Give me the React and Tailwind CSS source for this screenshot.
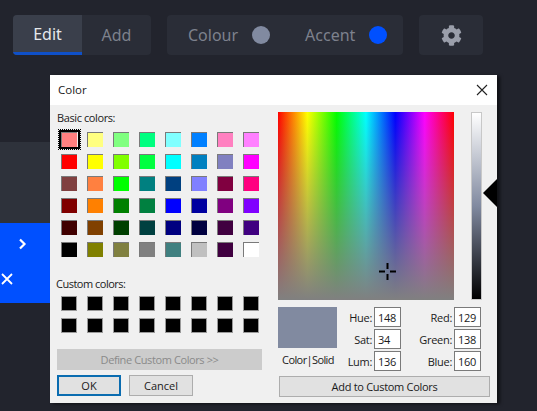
import React from "react";
import { FaCog } from "react-icons/fa";

const basic = [
  "bg-[#ff8080]","bg-[#ffff80]","bg-[#80ff80]","bg-[#00ff80]","bg-[#80ffff]","bg-[#0080ff]","bg-[#ff80c0]","bg-[#ff80ff]",
  "bg-[#ff0000]","bg-[#ffff00]","bg-[#80ff00]","bg-[#00ff40]","bg-[#00ffff]","bg-[#0080c0]","bg-[#8080c0]","bg-[#ff00ff]",
  "bg-[#804040]","bg-[#ff8040]","bg-[#00ff00]","bg-[#008080]","bg-[#004080]","bg-[#8080ff]","bg-[#800040]","bg-[#ff0080]",
  "bg-[#800000]","bg-[#ff8000]","bg-[#008000]","bg-[#008040]","bg-[#0000ff]","bg-[#0000a0]","bg-[#800080]","bg-[#8000ff]",
  "bg-[#400000]","bg-[#804000]","bg-[#004000]","bg-[#004040]","bg-[#000080]","bg-[#000040]","bg-[#400040]","bg-[#400080]",
  "bg-[#000000]","bg-[#808000]","bg-[#808040]","bg-[#808080]","bg-[#408080]","bg-[#c0c0c0]","bg-[#400040]","bg-[#ffffff]",
];

function Swatch({ color, selected }) {
  return (
    <div className={`relative h-[15px] w-[16px] border-t border-l border-[#7a7a7a] ${color}`}>
      {selected && (
        <div className="absolute -top-[3px] -left-[3px] h-[19px] w-[21px] border-2 border-black outline-1 outline-offset-0 outline-dotted outline-black" />
      )}
    </div>
  );
}

function Field({ label, value, labelWidth }) {
  return (
    <div className="flex items-center">
      <span className={`text-right ${labelWidth}`}>{label}</span>
      <div className="ml-[2px] flex h-[20px] w-[27px] items-center border border-[#7a7a7a] bg-white pl-[3px]">{value}</div>
    </div>
  );
}

export default function App() {
  return (
    <div className="relative h-[411px] w-[537px] overflow-hidden bg-[#22242d] font-['Noto_Sans',sans-serif]">
      <div className="flex gap-4 pl-[13px] pt-[15px] text-base">
        <div className="flex h-10 w-[138px] overflow-hidden rounded-sm bg-[#2a2d37] text-[#7d818d]">
          <div className="flex w-[69px] items-center justify-center border-b-[3px] border-[#0f50c8] bg-[#3a3f4b] text-[#e6e8ec]">Edit</div>
          <div className="flex w-[69px] items-center justify-center">Add</div>
        </div>
        <div className="flex h-10 w-[236px] items-center rounded-sm bg-[#2a2d37] pl-[21px] text-[#7d818d]">
          <span>Colour</span>
          <span className="ml-[14px] h-[18px] w-[18px] rounded-full bg-[#818aa0]" />
          <span className="ml-[35px]">Accent</span>
          <span className="ml-[14px] h-[18px] w-[18px] rounded-full bg-[#0050ff]" />
        </div>
        <div className="flex h-10 w-16 items-center justify-center rounded-sm bg-[#2a2d37] text-[#9a9eaa]">
          <FaCog size={21} />
        </div>
      </div>

      <div className="mt-[87px] flex h-[161px] w-[50px] flex-col">
        <div className="h-[81px] bg-[#2e323b]" />
        <div className="flex h-[80px] flex-col bg-[#0050ff] text-white">
          <svg className="ml-[18px] mt-[15px]" width="9" height="12" viewBox="0 0 9 12" fill="none" stroke="currentColor" strokeWidth="2.2">
            <path d="M2 1.5 L6.5 6 L2 10.5" />
          </svg>
          <svg className="ml-[1px] mt-[23px]" width="12" height="12" viewBox="0 0 12 12" fill="none" stroke="currentColor" strokeWidth="1.8">
            <path d="M1 1 L11 11 M11 1 L1 11" />
          </svg>
        </div>
      </div>

      <div className="absolute left-[50px] top-[75px] flex h-[328px] w-[447px] flex-col bg-[#f0f0f0] text-[11px] leading-none text-[#1a1a1a] shadow-[3px_1px_3px_rgba(0,0,0,0.55)] font-['Open_Sans',sans-serif]">
        <div className="flex h-[30px] shrink-0 items-center justify-between bg-white pl-[8px] pr-[9px] text-[11.5px]">
          <span>Color</span>
          <svg width="12" height="12" viewBox="0 0 12 12" fill="none" stroke="#222" strokeWidth="1.1">
            <path d="M1 1 L11 11 M11 1 L1 11" />
          </svg>
        </div>
        <div className="flex flex-1">
          <div className="w-[228px] pl-[7px]">
            <div className="pt-[7px] tracking-[-0.4px]">Basic colors:</div>
            <div className="ml-[4px] mt-[9px] grid grid-cols-[repeat(8,16px)] gap-x-[10px] gap-y-[7px]">
              {basic.map((c, i) => (
                <Swatch key={i} color={c} selected={i === 0} />
              ))}
            </div>
            <div className="pt-[21px] -ml-px tracking-[-0.5px]">Custom colors:</div>
            <div className="ml-[4px] mt-[7px] grid grid-cols-[repeat(8,16px)] gap-x-[10px] gap-y-[7px]">
              {Array.from({ length: 16 }).map((_, i) => (
                <div key={i} className="h-[15px] w-[16px] border border-[#9a9a9a] bg-black" />
              ))}
            </div>
            <div className="mt-[16px] flex h-[21px] w-[205px] items-center justify-center bg-[#cccccc] tracking-[-0.4px] text-[#8a8a8a]">Define Custom Colors &gt;&gt;</div>
            <div className="mt-[5px] flex gap-2">
              <div className="flex h-[21px] w-[64px] items-center justify-center border-2 border-[#0a6cb0] bg-[#e1e1e1]">OK</div>
              <div className="flex h-[21px] w-[64px] items-center justify-center border border-[#adadad] bg-[#e1e1e1]">Cancel</div>
            </div>
          </div>
          <div className="w-[219px]">
            <div className="flex pt-[7px]">
              <div className="relative h-[188px] w-[176px] bg-[linear-gradient(to_bottom,rgba(128,128,128,0),#808080),linear-gradient(to_right,#ff0000,#ffff00,#00ff00,#00ffff,#0000ff,#ff00ff,#ff0000)]">
                <svg className="absolute left-[100px] top-[150px]" width="19" height="19" viewBox="0 0 19 19" stroke="#000" strokeWidth="2">
                  <path d="M9.5 1 V7 M9.5 12 V18 M1 9.5 H7 M12 9.5 H18" />
                </svg>
              </div>
              <div className="ml-[17px] h-[188px] w-[11px] border border-[#c8c8c8] bg-[linear-gradient(to_bottom,#ffffff,#818aa0_50%,#000000)]" />
            </div>
            <div className="mt-[7px] flex">
              <div className="w-[60px] text-center">
                <div className="h-[41px] w-[59px] bg-[#818aa0]" />
                <div className="mt-[5px] whitespace-nowrap pt-[1px] tracking-[-0.6px]">Color|Solid</div>
              </div>
              <div className="ml-[4px] flex flex-col gap-[2px] tracking-[-0.3px]">
                <Field label="Hue:" value="148" labelWidth="w-[30px]" />
                <Field label="Sat:" value="34" labelWidth="w-[30px]" />
                <Field label="Lum:" value="136" labelWidth="w-[30px]" />
              </div>
              <div className="ml-[9px] flex flex-col gap-[2px] tracking-[-0.3px]">
                <Field label="Red:" value="129" labelWidth="w-[42px]" />
                <Field label="Green:" value="138" labelWidth="w-[42px]" />
                <Field label="Blue:" value="160" labelWidth="w-[42px]" />
              </div>
            </div>
            <div className="ml-[1px] mt-[5px] flex h-[21px] w-[211px] items-center justify-center border border-[#adadad] bg-[#e1e1e1] tracking-[-0.3px]">Add to Custom Colors</div>
          </div>
        </div>
      </div>

      <div className="absolute left-[483px] top-[179px] h-0 w-0 border-y-[14px] border-r-[14px] border-y-transparent border-r-black" />
    </div>
  );
}
